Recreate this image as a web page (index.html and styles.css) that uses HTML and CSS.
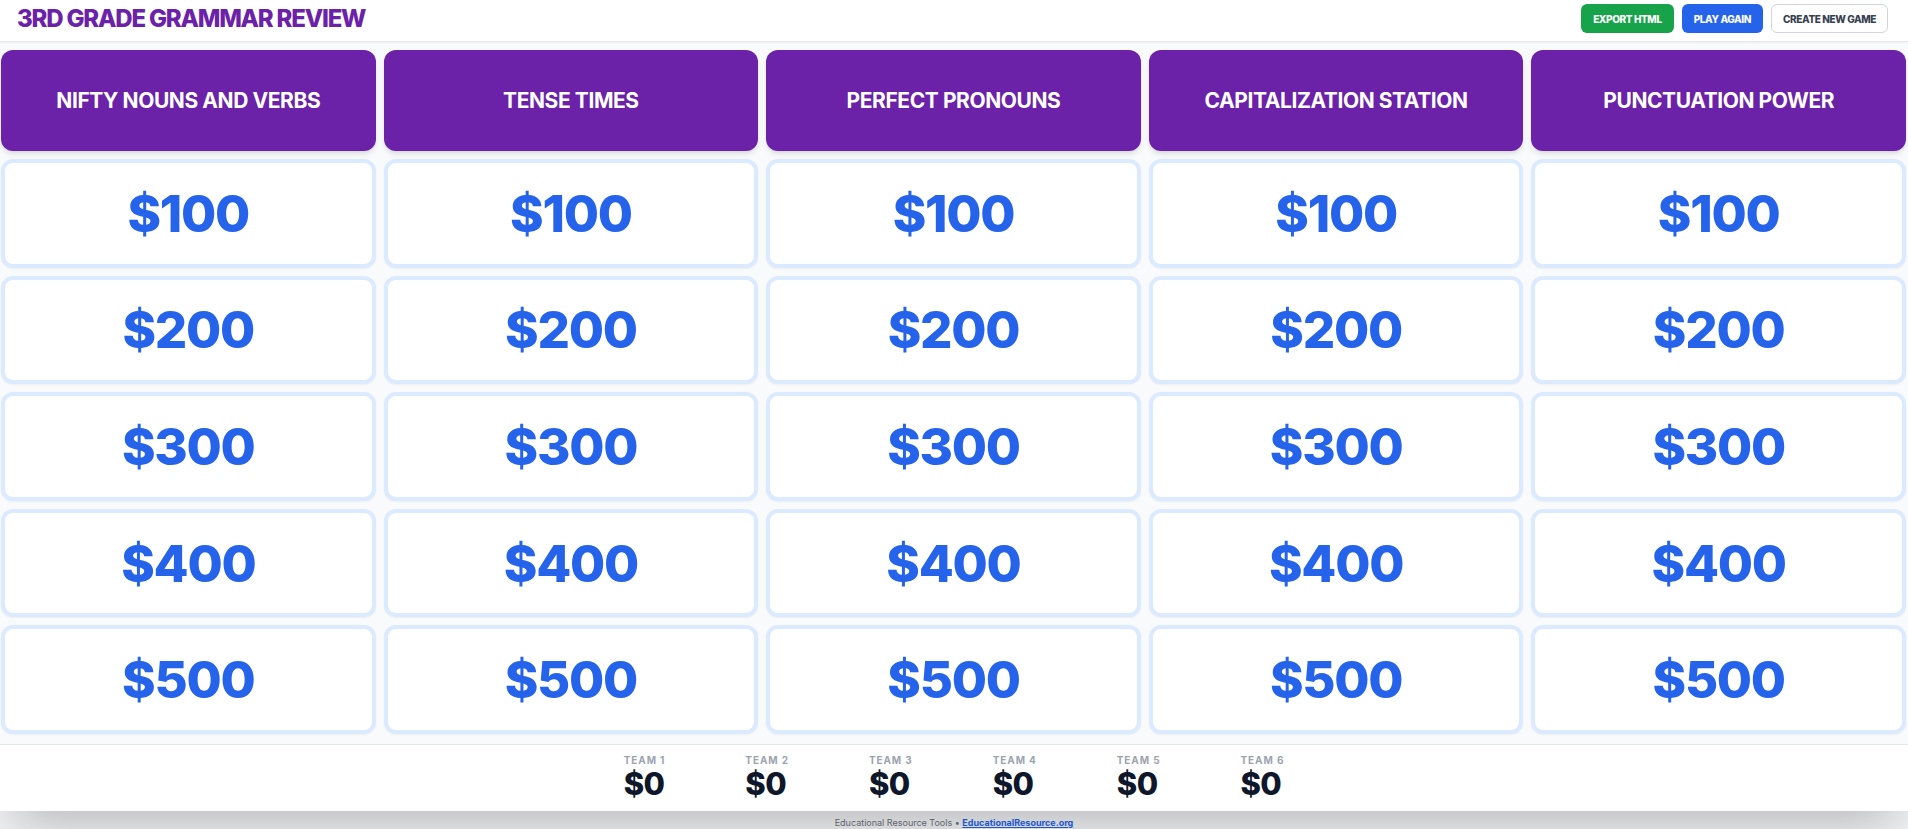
FILE: index.html
```
<!DOCTYPE html>
<html lang="en">
<head>
<meta charset="utf-8">
<title>3rd Grade Grammar Review</title>
<link rel="stylesheet" href="styles.css">
</head>
<body>
<div class="app">
  <header class="topbar">
    <h1 class="title">3RD GRADE GRAMMAR REVIEW</h1>
    <div class="actions">
      <button class="btn btn-green">EXPORT HTML</button>
      <button class="btn btn-blue">PLAY AGAIN</button>
      <button class="btn btn-white">CREATE NEW GAME</button>
    </div>
  </header>
  <main class="board">
    <div class="cat">NIFTY NOUNS AND VERBS</div>
    <div class="cat">TENSE TIMES</div>
    <div class="cat">PERFECT PRONOUNS</div>
    <div class="cat">CAPITALIZATION STATION</div>
    <div class="cat">PUNCTUATION POWER</div>

    <div class="cell">$100</div><div class="cell">$100</div><div class="cell">$100</div><div class="cell">$100</div><div class="cell">$100</div>
    <div class="cell">$200</div><div class="cell">$200</div><div class="cell">$200</div><div class="cell">$200</div><div class="cell">$200</div>
    <div class="cell">$300</div><div class="cell">$300</div><div class="cell">$300</div><div class="cell">$300</div><div class="cell">$300</div>
    <div class="cell">$400</div><div class="cell">$400</div><div class="cell">$400</div><div class="cell">$400</div><div class="cell">$400</div>
    <div class="cell">$500</div><div class="cell">$500</div><div class="cell">$500</div><div class="cell">$500</div><div class="cell">$500</div>
  </main>
  <section class="teams">
    <div class="team"><div class="team-name">TEAM 1</div><div class="team-score">$0</div></div>
    <div class="team"><div class="team-name">TEAM 2</div><div class="team-score">$0</div></div>
    <div class="team"><div class="team-name">TEAM 3</div><div class="team-score">$0</div></div>
    <div class="team"><div class="team-name">TEAM 4</div><div class="team-score">$0</div></div>
    <div class="team"><div class="team-name">TEAM 5</div><div class="team-score">$0</div></div>
    <div class="team"><div class="team-name">TEAM 6</div><div class="team-score">$0</div></div>
  </section>
</div>
<footer class="footer">Educational Resource Tools • <a class="footer-link" href="#">EducationalResource.org</a></footer>
</body>
</html>
```
FILE: styles.css
```
* { box-sizing: border-box; }
html, body { margin: 0; padding: 0; }
body {
  background: #f3f4f6;
  font-family: Inter, "Noto Sans", "Liberation Sans", sans-serif;
  width: 1908px;
  height: 829px;
  overflow: hidden;
}
.app {
  height: 811px;
  display: flex;
  flex-direction: column;
  background: #ffffff;
  box-shadow: 0 25px 50px -12px rgba(0, 0, 0, 0.25);
  position: relative;
}
.topbar {
  height: 42px;
  flex: none;
  display: flex;
  align-items: center;
  justify-content: space-between;
  padding: 4px 20px 8px 17px;
  background: #ffffff;
  border-bottom: 1px solid #e5e7eb;
  box-shadow: 0 1px 2px rgba(0, 0, 0, 0.05);
  position: relative;
  z-index: 1;
}
.title {
  margin: 0;
  font-size: 24px;
  font-weight: 800;
  letter-spacing: -0.05em;
  color: #6b21a8;
  line-height: 1;
}
.actions {
  display: flex;
  gap: 8px;
}
.btn {
  height: 29px;
  padding: 0 11px;
  border-radius: 6px;
  border: 1px solid transparent;
  font-family: inherit;
  font-size: 10px;
  font-weight: 800;
  letter-spacing: -0.04em;
  cursor: pointer;
}
.btn-green { background: #16a34a; color: #ffffff; }
.btn-blue { background: #2563eb; color: #ffffff; }
.btn-white { background: #ffffff; color: #374151; border-color: #d1d5db; }
.board {
  flex: 1;
  display: grid;
  grid-template-columns: repeat(5, 1fr);
  grid-template-rows: 101px repeat(5, 1fr);
  gap: 8px;
  padding: 8px 2px 10px 1px;
  background: #f8fafc;
}
.cat {
  background: #6b21a8;
  color: #ffffff;
  border-radius: 12px;
  display: flex;
  align-items: center;
  justify-content: center;
  text-align: center;
  font-size: 21px;
  font-weight: 700;
  letter-spacing: -0.02em;
  box-shadow: 0 4px 6px -1px rgba(0, 0, 0, 0.1), 0 2px 4px -2px rgba(0, 0, 0, 0.1);
}
.cell {
  background: #ffffff;
  border: 4px solid #dbeafe;
  border-radius: 12px;
  display: flex;
  align-items: center;
  justify-content: center;
  color: #2563eb;
  font-size: 51px;
  font-weight: 800;
  letter-spacing: -0.025em;
  box-shadow: 0 1px 2px rgba(0, 0, 0, 0.05);
}
.teams {
  flex: none;
  height: 67px;
  border-top: 1px solid #e5e7eb;
  background: #ffffff;
  display: flex;
  justify-content: center;
  align-items: center;
  gap: 80px;
}
.team {
  display: flex;
  flex-direction: column;
  align-items: flex-start;
}
.team-name {
  font-size: 10px;
  font-weight: 700;
  letter-spacing: 0.09em;
  color: #9ca3af;
  line-height: 12px;
}
.team-score {
  font-size: 31px;
  font-weight: 800;
  color: #0f172a;
  line-height: 36px;
  letter-spacing: -0.02em;
}
.footer {
  text-align: center;
  font-size: 9px;
  line-height: 12px;
  padding-top: 6px;
  color: #6b7280;
}
.footer-link {
  color: #2563eb;
  font-weight: 700;
  text-decoration: underline;
}
```
